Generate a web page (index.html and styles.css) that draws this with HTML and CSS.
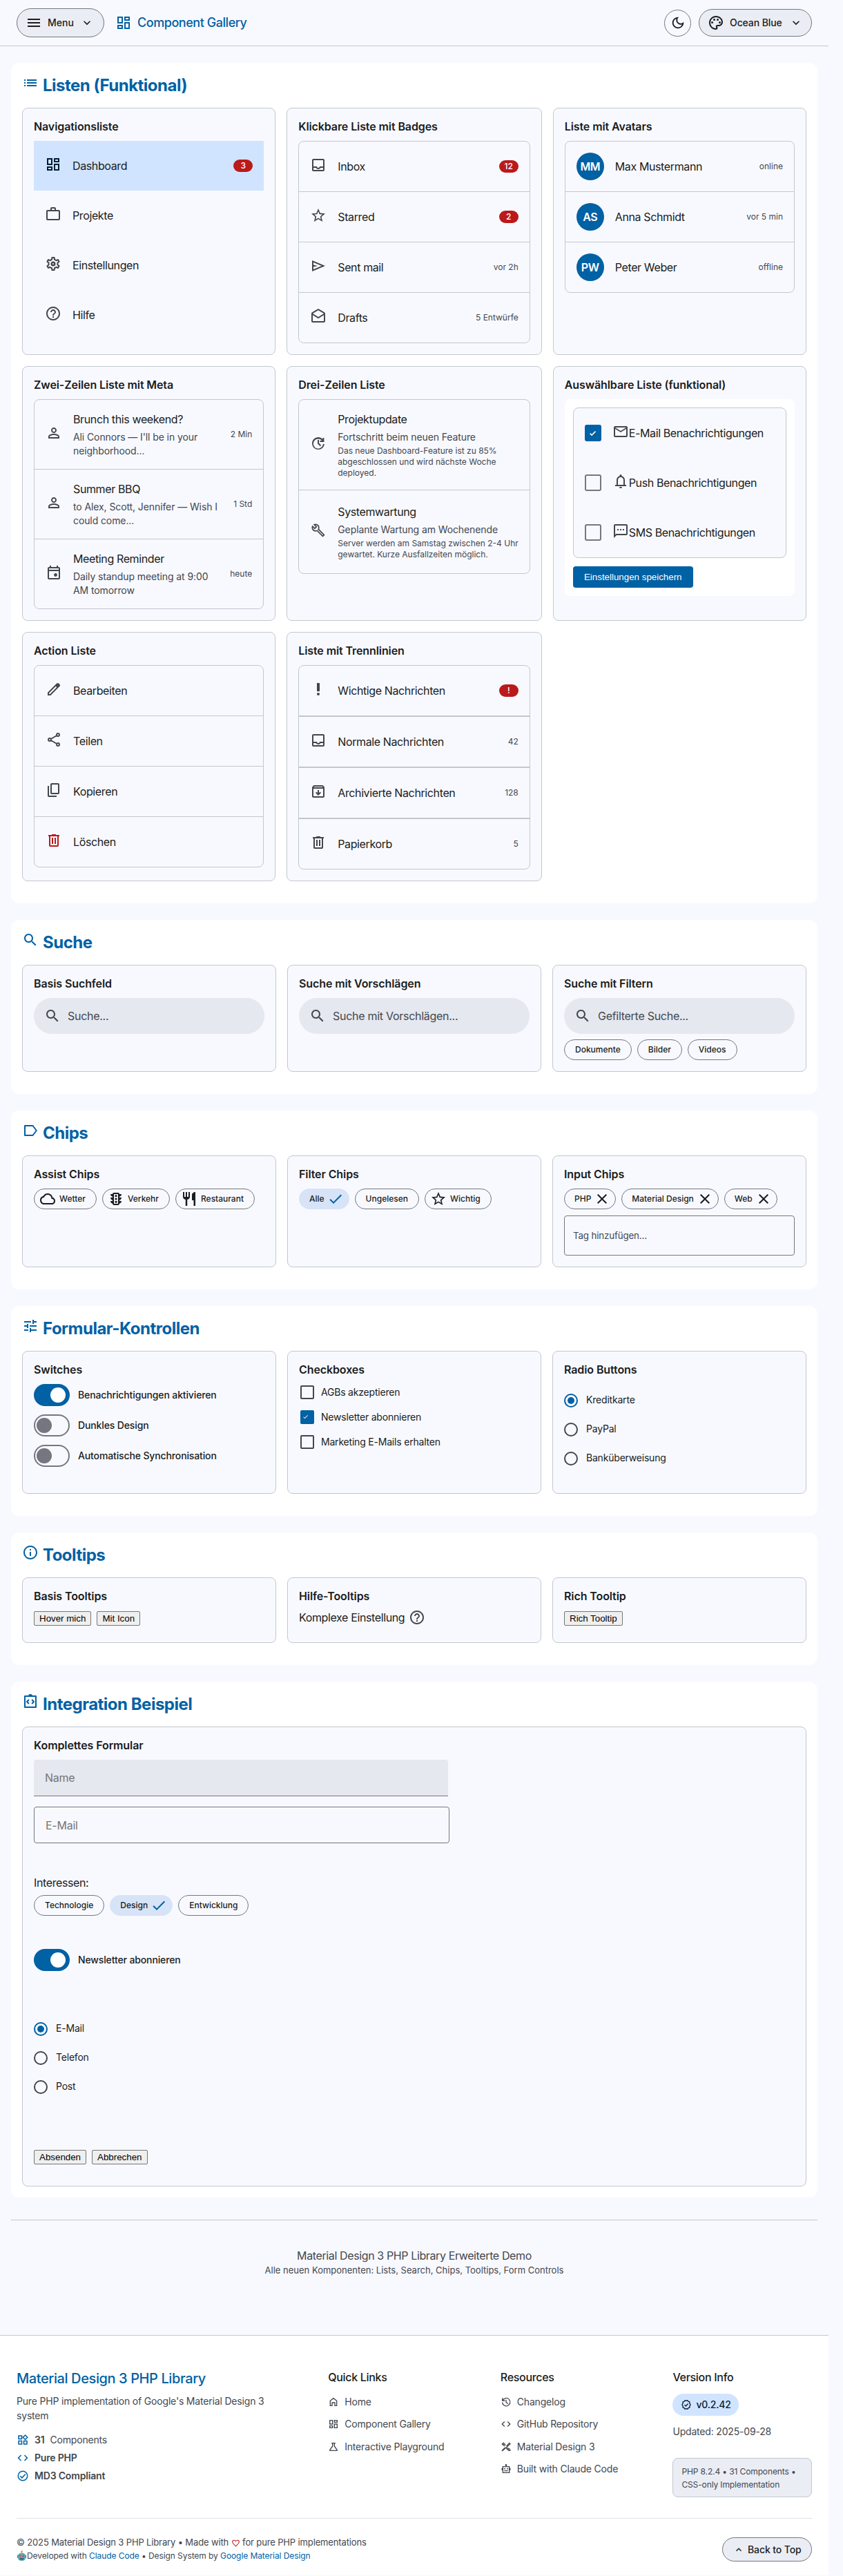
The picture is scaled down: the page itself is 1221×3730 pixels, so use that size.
FILE: index.html
```html
<!DOCTYPE html>
<html lang="de">
<head>
<meta charset="utf-8">
<title>Component Gallery</title>
<link rel="stylesheet" href="styles.css">
</head>
<body>
<svg class="sprite" aria-hidden="true">
<symbol id="dashboard" viewBox="0 0 24 24"><path d="M19 5v2h-4V5h4M9 5v6H5V5h4m10 8v6h-4v-6h4M9 17v2H5v-2h4M21 3h-8v6h8V3zM11 3H3v10h8V3zm10 8h-8v10h8V11zm-10 4H3v6h8v-6z"/></symbol>
<symbol id="menu" viewBox="0 0 24 24"><path d="M3 18h18v-2H3v2zm0-5h18v-2H3v2zm0-7v2h18V6H3z"/></symbol>
<symbol id="down" viewBox="0 0 24 24"><path d="M16.59 8.59 12 13.17 7.41 8.59 6 10l6 6 6-6z"/></symbol>
<symbol id="up" viewBox="0 0 24 24"><path d="M7.41 15.41 12 10.83l4.59 4.58L18 14l-6-6-6 6z"/></symbol>
<symbol id="moon" viewBox="0 0 24 24"><path d="M9.37 5.51c-.18.64-.27 1.31-.27 1.99 0 4.08 3.32 7.4 7.4 7.4.68 0 1.35-.09 1.99-.27C17.45 17.19 14.93 19 12 19c-3.86 0-7-3.14-7-7 0-2.93 1.81-5.45 4.37-6.49zM12 3c-4.97 0-9 4.03-9 9s4.03 9 9 9 9-4.03 9-9c0-.46-.04-.92-.1-1.36-.98 1.37-2.58 2.26-4.4 2.26-2.98 0-5.4-2.42-5.4-5.4 0-1.81.89-3.42 2.26-4.4-.44-.06-.9-.1-1.36-.1z"/></symbol>
<symbol id="palette" viewBox="0 0 24 24"><path d="M12 22C6.49 22 2 17.51 2 12S6.49 2 12 2s10 4.04 10 9c0 3.31-2.69 6-6 6h-1.77c-.28 0-.5.22-.5.5 0 .12.05.23.13.33.41.47.64 1.06.64 1.67 0 1.38-1.12 2.5-2.5 2.5zm0-18c-4.41 0-8 3.59-8 8s3.59 8 8 8c.28 0 .5-.22.5-.5 0-.16-.08-.28-.14-.35-.41-.46-.63-1.05-.63-1.65 0-1.38 1.12-2.5 2.5-2.5H16c2.21 0 4-1.79 4-4 0-3.86-3.59-7-8-7z"/><circle cx="6.5" cy="11.5" r="1.5"/><circle cx="9.5" cy="7.5" r="1.5"/><circle cx="14.5" cy="7.5" r="1.5"/><circle cx="17.5" cy="11.5" r="1.5"/></symbol>
<symbol id="list" viewBox="0 0 24 24"><path d="M3 13h2v-2H3v2zm0 4h2v-2H3v2zm0-8h2V7H3v2zm4 4h14v-2H7v2zm0 4h14v-2H7v2zM7 7v2h14V7H7z"/></symbol>
<symbol id="work" viewBox="0 0 24 24"><path d="M14 6V4h-4v2h4zM4 8v11h16V8H4zm16-2c1.11 0 2 .89 2 2v11c0 1.11-.89 2-2 2H4c-1.11 0-2-.89-2-2l.01-11c0-1.11.88-2 1.99-2h4V4c0-1.11.89-2 2-2h4c1.11 0 2 .89 2 2v2h4z"/></symbol>
<symbol id="settings" viewBox="0 0 24 24"><path fill-rule="evenodd" d="M19.43 12.98c.04-.32.07-.64.07-.98 0-.34-.03-.66-.07-.98l2.11-1.65c.19-.15.24-.42.12-.64l-2-3.46c-.09-.16-.26-.25-.44-.25-.06 0-.12.01-.17.03l-2.49 1c-.52-.4-1.08-.73-1.69-.98l-.38-2.65C14.46 2.18 14.25 2 14 2h-4c-.25 0-.46.18-.49.42l-.38 2.65c-.61.25-1.17.59-1.69.98l-2.49-1c-.06-.02-.12-.03-.18-.03-.17 0-.34.09-.43.25l-2 3.46c-.13.22-.07.49.12.64l2.11 1.65c-.04.32-.07.65-.07.98 0 .33.03.66.07.98l-2.11 1.65c-.19.15-.24.42-.12.64l2 3.46c.09.16.26.25.44.25.06 0 .12-.01.17-.03l2.49-1c.52.4 1.08.73 1.69.98l.38 2.65c.03.24.24.42.49.42h4c.25 0 .46-.18.49-.42l.38-2.65c.61-.25 1.17-.59 1.69-.98l2.49 1c.06.02.12.03.18.03.17 0 .34-.09.43-.25l2-3.46c.12-.22.07-.49-.12-.64l-2.11-1.65zm-1.98-1.71c.04.31.05.52.05.73 0 .21-.02.43-.05.73l-.14 1.13.89.7 1.08.84-.7 1.21-1.27-.51-1.04-.42-.9.68c-.43.32-.84.56-1.25.73l-1.06.43-.16 1.13-.2 1.35h-1.4l-.19-1.35-.16-1.13-1.06-.43c-.43-.18-.83-.41-1.23-.71l-.91-.7-1.06.43-1.27.51-.7-1.21 1.08-.84.89-.7-.14-1.13c-.03-.31-.05-.54-.05-.74s.02-.43.05-.73l.14-1.13-.89-.7-1.08-.84.7-1.21 1.27.51 1.04.42.9-.68c.43-.32.84-.56 1.25-.73l1.06-.43.16-1.13.2-1.35h1.39l.19 1.35.16 1.13 1.06.43c.43.18.83.41 1.23.71l.91.7 1.06-.43 1.27-.51.7 1.21-1.07.85-.89.7.14 1.13zM12 8.5a3.5 3.5 0 1 0 0 7 3.5 3.5 0 0 0 0-7zm0 2.4a1.1 1.1 0 1 1 0 2.2 1.1 1.1 0 0 1 0-2.2z"/></symbol>
<symbol id="help" viewBox="0 0 24 24"><path d="M11 18h2v-2h-2v2zm1-16C6.48 2 2 6.48 2 12s4.48 10 10 10 10-4.48 10-10S17.52 2 12 2zm0 18c-4.41 0-8-3.59-8-8s3.59-8 8-8 8 3.59 8 8-3.59 8-8 8zm0-14c-2.21 0-4 1.79-4 4h2c0-1.1.9-2 2-2s2 .9 2 2c0 2-3 1.75-3 5h2c0-2.25 3-2.5 3-5 0-2.21-1.79-4-4-4z"/></symbol>
<symbol id="inbox" viewBox="0 0 24 24"><path d="M19 3H5c-1.1 0-2 .9-2 2v14c0 1.1.89 2 2 2h14c1.1 0 2-.9 2-2V5c0-1.1-.9-2-2-2zm0 16H5v-3h3.56c.69 1.19 1.97 2 3.45 2s2.75-.81 3.45-2H19v3zm0-5h-4.99c0 1.1-.9 2-2 2s-2-.9-2-2H5V5h14v9z"/></symbol>
<symbol id="star" viewBox="0 0 24 24"><path d="M22 9.24l-7.19-.62L12 2 9.19 8.63 2 9.24l5.46 4.73L5.82 21 12 17.27 18.18 21l-1.63-7.03L22 9.24zM12 15.4l-3.76 2.27 1-4.28-3.32-2.88 4.38-.38L12 6.1l1.71 4.04 4.38.38-3.32 2.88 1 4.28L12 15.4z"/></symbol>
<symbol id="send" viewBox="0 0 24 24"><path d="M3 20V4l19 8zm2-3 11.85-5L5 7v3.5l6 1.5-6 1.5z"/></symbol>
<symbol id="drafts" viewBox="0 0 24 24"><path d="M21.99 8c0-.72-.37-1.35-.94-1.7L12 1 2.95 6.3C2.38 6.65 2 7.28 2 8v11c0 1.1.9 2 2 2h16c1.1 0 2-.9 2-2l-.01-11zM20 8v.01L12 13 4 8l8-4.68L20 8zM4 19v-8.66l8 5.02 8-5.02V19H4z"/></symbol>
<symbol id="person" viewBox="0 0 24 24"><path d="M12 5.9c1.16 0 2.1.94 2.1 2.1s-.94 2.1-2.1 2.1S9.9 9.16 9.9 8s.94-2.1 2.1-2.1m0 9c2.97 0 6.1 1.46 6.1 2.1v1.1H5.9V17c0-.64 3.13-2.1 6.1-2.1M12 4C9.79 4 8 5.79 8 8s1.79 4 4 4 4-1.79 4-4-1.79-4-4-4zm0 9c-2.67 0-8 1.34-8 4v3h16v-3c0-2.66-5.33-4-8-4z"/></symbol>
<symbol id="event" viewBox="0 0 24 24"><path d="M19 4h-1V2h-2v2H8V2H6v2H5c-1.11 0-1.99.9-1.99 2L3 20c0 1.1.89 2 2 2h14c1.1 0 2-.9 2-2V6c0-1.1-.9-2-2-2zm0 16H5V10h14v10zm0-12H5V6h14v2z"/><circle cx="14.5" cy="15.5" r="2.4"/></symbol>
<symbol id="update" viewBox="0 0 24 24"><path d="M12 21a9 9 0 1 1 6.4-15.35V4h2v6h-6V8h2.85A7 7 0 1 0 18.9 13h2.05A9 9 0 0 1 12 21zm2.8-4.8L11 12.4V7h2v4.6l3.2 3.2z"/></symbol>
<symbol id="build" viewBox="0 0 24 24"><path transform="translate(1.6 1.6) scale(.86)" d="M22.61 19l-9.08-9.09c.93-2.34.45-5.1-1.44-7C9.79.61 6.21.4 3.66 2.26L7.5 6.11 6.08 7.52 2.25 3.69C.39 6.23.6 9.82 2.9 12.11c1.86 1.86 4.57 2.35 6.89 1.48l9.11 9.11c.39.39 1.02.39 1.41 0l2.3-2.3c.4-.38.4-1.01 0-1.4zm-3 1.59l-9.46-9.46c-.61.45-1.29.72-2 .82-1.36.2-2.79-.21-3.83-1.25C3.37 9.76 2.93 8.5 3 7.26l3.09 3.09 4.24-4.24-3.09-3.09c1.24-.07 2.49.37 3.44 1.31 1.08 1.08 1.49 2.57 1.24 3.96-.12.71-.42 1.37-.88 1.96l9.45 9.45-.88.89z"/></symbol>
<symbol id="mail" viewBox="0 0 24 24"><path d="M22 6c0-1.1-.9-2-2-2H4c-1.1 0-2 .9-2 2v12c0 1.1.9 2 2 2h16c1.1 0 2-.9 2-2V6zm-2 0l-8 5-8-5h16zm0 12H4V8l8 5 8-5v10z"/></symbol>
<symbol id="bell" viewBox="0 0 24 24"><path d="M4 19v-2h2v-7q0-2.075 1.25-3.687T10.5 4.2v-.7q0-.625.438-1.062T12 2t1.063.438T13.5 3.5v.7q2 .5 3.25 2.113T18 10v7h2v2zm8 3q-.825 0-1.412-.587T10 20h4q0 .825-.587 1.413T12 22m-4-5h8v-7q0-1.65-1.175-2.825T12 6T9.175 7.175T8 10z"/></symbol>
<symbol id="sms" viewBox="0 0 24 24"><path d="M20 2H4c-1.1 0-2 .9-2 2v18l4-4h14c1.1 0 2-.9 2-2V4c0-1.1-.9-2-2-2zm0 14H5.17L4 17.17V4h16v12zM7 9h2v2H7zm4 0h2v2h-2zm4 0h2v2h-2z"/></symbol>
<symbol id="edit" viewBox="0 0 24 24"><path fill-rule="evenodd" d="M3 21v-4.25L16.2 3.575q.3-.275.663-.425t.762-.15t.775.15t.65.45L20.425 5q.3.275.438.65T21 6.4q0 .4-.137.763t-.438.662L7.25 21zM5 19h1.4l9.8-9.8-1.4-1.4L5 17.6z"/></symbol>
<symbol id="share" viewBox="0 0 24 24"><path fill="none" stroke="currentColor" stroke-width="1.9" d="M18 3a2 2 0 1 0 0 4 2 2 0 0 0 0-4zM6 10a2 2 0 1 0 0 4 2 2 0 0 0 0-4zM18 17a2 2 0 1 0 0 4 2 2 0 0 0 0-4zM7.8 11l8.4-5M7.8 13l8.4 5"/></symbol>
<symbol id="copy" viewBox="0 0 24 24"><path d="M9 18q-.825 0-1.412-.587T7 16V4q0-.825.588-1.412T9 2h9q.825 0 1.413.588T20 4v12q0 .825-.587 1.413T18 18zm0-2h9V4H9zm-4 6q-.825 0-1.412-.587T3 20V6h2v14h11v2z"/></symbol>
<symbol id="delete" viewBox="0 0 24 24"><path d="M7 21q-.825 0-1.412-.587T5 19V6H4V4h5V3h6v1h5v2h-1v13q0 .825-.587 1.413T17 21zM17 6H7v13h10zM9 17h2V8H9zm4 0h2V8h-2z"/></symbol>
<symbol id="priority" viewBox="0 0 24 24"><circle cx="12" cy="19" r="2"/><path d="M10 3h4v12h-4z"/></symbol>
<symbol id="archive" viewBox="0 0 24 24"><path d="M20.54 5.23l-1.39-1.68C18.88 3.21 18.47 3 18 3H6c-.47 0-.88.21-1.16.55L3.46 5.23C3.17 5.57 3 6.02 3 6.5V19c0 1.1.9 2 2 2h14c1.1 0 2-.9 2-2V6.5c0-.48-.17-.93-.46-1.27zM6.24 5h11.52l.83 1H5.42l.82-1zM5 19V8h14v11H5z"/><path d="m16 14-4 4-4-4 1.4-1.4 1.6 1.6V10h2v4.2l1.6-1.6z"/></symbol>
<symbol id="search" viewBox="0 0 24 24"><path d="M15.5 14h-.79l-.28-.27C15.41 12.59 16 11.11 16 9.5 16 5.91 13.09 3 9.5 3S3 5.91 3 9.5 5.91 16 9.5 16c1.61 0 3.09-.59 4.23-1.57l.27.28v.79l5 4.99L20.49 19l-4.99-5zm-6 0C7.01 14 5 11.99 5 9.5S7.01 5 9.5 5 14 7.01 14 9.5 11.99 14 9.5 14z"/></symbol>
<symbol id="label" viewBox="0 0 24 24"><path fill="none" stroke="currentColor" stroke-width="2" stroke-linejoin="round" d="M4 5h11.5L20.8 12l-5.3 7H4z"/></symbol>
<symbol id="cloud" viewBox="0 0 24 24"><path d="M19.35 10.04C18.67 6.59 15.64 4 12 4 9.11 4 6.6 5.64 5.35 8.04 2.8 8.36 1 10.91 1 14c0 3.31 2.5 6 5.5 6H18.5c2.5 0 4.5-2.24 4.5-5 0-2.64-1.6-4.6-3.65-4.96zM18.5 18H6.5C4.6 18 3 16.2 3 14s1.6-4 3.5-4h.4C7.37 7.69 9.48 6 12 6c3.04 0 5.5 2.46 5.5 5.5v.5h1c1.4 0 2.5 1.34 2.5 3s-1.1 3-2.5 3z"/></symbol>
<symbol id="traffic" viewBox="0 0 24 24"><path fill-rule="evenodd" d="M20 10h-3V8.86c1.72-.45 3-2 3-3.86h-3c0-1.1-.9-2-2-2H9c-1.1 0-2 .9-2 2H4c0 1.86 1.28 3.41 3 3.86V10H4c0 1.86 1.28 3.41 3 3.86V15H4c0 1.86 1.28 3.41 3 3.86C7 20.1 7.9 21 9 21h6c1.1 0 2-.9 2-2.14 1.72-.45 3-2 3-3.86h-3v-1.14c1.72-.45 3-2 3-3.86zM9 5h6v14H9z"/><circle cx="12" cy="7.7" r="1.6"/><circle cx="12" cy="12" r="1.6"/><circle cx="12" cy="16.3" r="1.6"/></symbol>
<symbol id="restaurant" viewBox="0 0 24 24"><path d="M11 9H9V2H7v7H5V2H3v7c0 2.12 1.66 3.84 3.75 3.97V22h2.5v-9.03C11.34 12.84 13 11.12 13 9V2h-2v7zm5-3v8h2.5v8H21V2c-2.76 0-5 2.24-5 4z"/></symbol>
<symbol id="check" viewBox="0 0 24 24"><path d="M9 16.17 4.83 12l-1.42 1.41L9 19 21 7l-1.41-1.41z"/></symbol>
<symbol id="close" viewBox="0 0 24 24"><path d="M19 6.41 17.59 5 12 10.59 6.41 5 5 6.41 10.59 12 5 17.59 6.41 19 12 13.41 17.59 19 19 17.59 13.41 12z"/></symbol>
<symbol id="tune" viewBox="0 0 24 24"><path d="M3 17v2h6v-2H3zM3 5v2h10V5H3zm10 16v-2h8v-2h-8v-2h-2v6h2zM7 9v2H3v2h4v2h2V9H7zm14 4v-2H11v2h10zm-6-4h2V7h4V5h-4V3h-2v6z"/></symbol>
<symbol id="info" viewBox="0 0 24 24"><path d="M11 7h2v2h-2zm0 4h2v6h-2zm1-9C6.48 2 2 6.48 2 12s4.48 10 10 10 10-4.48 10-10S17.52 2 12 2zm0 18c-4.41 0-8-3.59-8-8s3.59-8 8-8 8 3.59 8 8-3.59 8-8 8z"/></symbol>
<symbol id="integration" viewBox="0 0 24 24"><path fill="none" stroke="currentColor" stroke-width="2" stroke-linejoin="round" d="M4 4h16v16H4zM9.8 9 7 12l2.8 3M14.2 9l2.8 3-2.8 3"/><path d="M9 4a3 3 0 0 1 6 0z"/></symbol>
<symbol id="widgets" viewBox="0 0 24 24"><path fill="none" stroke="currentColor" stroke-width="2" d="M4 4h6v6H4zM4 14h6v6H4zM14 14h6v6h-6zM16.7 2.7 21 7l-4.3 4.3L12.4 7z"/></symbol>
<symbol id="code" viewBox="0 0 24 24"><path d="M9.4 16.6 4.8 12l4.6-4.6L8 6l-6 6 6 6zm5.2 0 4.6-4.6-4.6-4.6L16 6l6 6-6 6z"/></symbol>
<symbol id="checkcircle" viewBox="0 0 24 24"><path fill="none" stroke="currentColor" stroke-width="2" d="M12 3a9 9 0 1 0 0 18 9 9 0 0 0 0-18zM7 12.3l3.5 3.5 6.5-7"/></symbol>
<symbol id="home" viewBox="0 0 24 24"><path fill="none" stroke="currentColor" stroke-width="2" d="M5 9.5 12 4l7 5.500V20h-4v-6.500H9V20H5z"/></symbol>
<symbol id="science" viewBox="0 0 24 24"><path fill="none" stroke="currentColor" stroke-width="2" stroke-linejoin="round" d="M7.5 4h9M10 4v6.5L4 19c-.3.6 0 1 .6 1h14.8c.6 0 .9-.4.6-1l-6-8.500V4"/></symbol>
<symbol id="history" viewBox="0 0 24 24"><path fill="none" stroke="currentColor" stroke-width="2" d="M4 3.500V9h5.500M4.600 8.500A8.500 8.500 0 1 1 3.800 13M12 7v5.400l4 3.800"/></symbol>
<symbol id="design" viewBox="0 0 24 24"><path fill="none" stroke="currentColor" stroke-width="2" stroke-linejoin="round" d="M9.500 10.500 3.300 6.300 6.300 3.300l4.700 5.200M13 10.500l6-7 2 2-17 15H3.500V20L10 13.500M14 14l5.500 2.500L21 20h-3.500l-5-5M6.500 7l2-2M16 18l2-2"/></symbol>
<symbol id="robot" viewBox="0 0 24 24"><path fill="none" stroke="currentColor" stroke-width="2" d="M5 7h14v13H5zM12 7V3M8 16h8"/><circle cx="12" cy="3.500" r="2"/><circle cx="9" cy="11.500" r="1.500"/><circle cx="15" cy="11.500" r="1.500"/><path d="M5 9.500a3 3 0 0 0 0 6zM19 9.500a3 3 0 0 1 0 6z"/></symbol>
<symbol id="verified" viewBox="0 0 24 24"><path fill="none" stroke="currentColor" stroke-width="2" stroke-linejoin="round" d="M12 3.600 14.800 2.500 16.400 5.100 19.400 5.800 19.100 8.800 21.200 12 19.100 15.200 19.400 18.200 16.400 18.900 14.800 21.500 12 20.400 9.200 21.500 7.600 18.900 4.600 18.200 4.900 15.200 2.800 12 4.900 8.800 4.600 5.800 7.600 5.100 9.200 2.500zM8.200 12.200l2.700 2.700 5-5.200"/></symbol>
<symbol id="heart" viewBox="0 0 24 24"><path fill="none" stroke="currentColor" stroke-width="2" d="M12 20C5.500 14.500 3 12 3 8.500 3 6 5 4 7.500 4 9.500 4 11 5 12 6.500 13 5 14.500 4 16.500 4 19 4 21 6 21 8.500c0 3.500-2.500 6-9 11.500z"/></symbol>
</svg>
<div class="page">
<header class="topbar">
  <div class="pill pill-menu"><svg class="i24"><use href="#menu"/></svg><span>Menu</span><svg class="i20"><use href="#down"/></svg></div>
  <div class="brand"><svg class="i24"><use href="#dashboard"/></svg><span>Component Gallery</span></div>
  <div class="round"><svg class="i22"><use href="#moon"/></svg></div>
  <div class="pill pill-theme"><svg class="i24"><use href="#palette"/></svg><span>Ocean Blue</span><svg class="i20"><use href="#down"/></svg></div>
</header>
<main>
<section class="section">
  <h2><svg class="i24"><use href="#list"/></svg>Listen (Funktional)</h2>
  <div class="grid">
    <article class="card"><h3>Navigationsliste</h3>
      <ul class="list plain">
        <li class="active"><svg class="i24"><use href="#dashboard"/></svg><span class="t">Dashboard</span><b class="badge">3</b></li>
        <li><svg class="i24"><use href="#work"/></svg><span class="t">Projekte</span></li>
        <li><svg class="i24"><use href="#settings"/></svg><span class="t">Einstellungen</span></li>
        <li><svg class="i24"><use href="#help"/></svg><span class="t">Hilfe</span></li>
      </ul></article>
    <article class="card"><h3>Klickbare Liste mit Badges</h3>
      <ul class="list">
        <li><svg class="i24"><use href="#inbox"/></svg><span class="t">Inbox</span><b class="badge">12</b></li>
        <li><svg class="i24"><use href="#star"/></svg><span class="t">Starred</span><b class="badge">2</b></li>
        <li><svg class="i24"><use href="#send"/></svg><span class="t">Sent mail</span><small>vor 2h</small></li>
        <li><svg class="i24"><use href="#drafts"/></svg><span class="t">Drafts</span><small>5 Entwürfe</small></li>
      </ul></article>
    <article class="card"><h3>Liste mit Avatars</h3>
      <ul class="list">
        <li><b class="avatar">MM</b><span class="t">Max Mustermann</span><small>online</small></li>
        <li><b class="avatar">AS</b><span class="t">Anna Schmidt</span><small>vor 5 min</small></li>
        <li><b class="avatar">PW</b><span class="t">Peter Weber</span><small>offline</small></li>
      </ul></article>
    <article class="card"><h3>Zwei-Zeilen Liste mit Meta</h3>
      <ul class="list">
        <li><svg class="i24"><use href="#person"/></svg><div class="t">Brunch this weekend?<p>Ali Connors — I'll be in your<br>neighborhood...</p></div><small>2 Min</small></li>
        <li><svg class="i24"><use href="#person"/></svg><div class="t">Summer BBQ<p>to Alex, Scott, Jennifer — Wish I<br>could come...</p></div><small>1 Std</small></li>
        <li><svg class="i24"><use href="#event"/></svg><div class="t">Meeting Reminder<p>Daily standup meeting at 9:00<br>AM tomorrow</p></div><small>heute</small></li>
      </ul></article>
    <article class="card"><h3>Drei-Zeilen Liste</h3>
      <ul class="list three">
        <li><svg class="i24"><use href="#update"/></svg><div class="t">Projektupdate<p>Fortschritt beim neuen Feature</p><p class="body">Das neue Dashboard-Feature ist zu 85%<br>abgeschlossen und wird nächste Woche<br>deployed.</p></div></li>
        <li><svg class="i24"><use href="#build"/></svg><div class="t">Systemwartung<p>Geplante Wartung am Wochenende</p><p class="body">Server werden am Samstag zwischen 2-4 Uhr<br>gewartet. Kurze Ausfallzeiten möglich.</p></div></li>
      </ul></article>
    <article class="card"><h3>Auswählbare Liste (funktional)</h3>
      <form class="panel">
      <ul class="list select">
        <li><i class="box on"><svg><use href="#check"/></svg></i><svg class="i24"><use href="#mail"/></svg><span class="t">E-Mail Benachrichtigungen</span></li>
        <li><i class="box"></i><svg class="i24"><use href="#bell"/></svg><span class="t">Push Benachrichtigungen</span></li>
        <li><i class="box"></i><svg class="i24"><use href="#sms"/></svg><span class="t">SMS Benachrichtigungen</span></li>
      </ul>
      <button type="button" class="save">Einstellungen speichern</button>
      </form></article>
    <article class="card"><h3>Action Liste</h3>
      <ul class="list">
        <li><svg class="i24"><use href="#edit"/></svg><span class="t">Bearbeiten</span></li>
        <li><svg class="i24"><use href="#share"/></svg><span class="t">Teilen</span></li>
        <li><svg class="i24"><use href="#copy"/></svg><span class="t">Kopieren</span></li>
        <li><svg class="i24 danger"><use href="#delete"/></svg><span class="t">Löschen</span></li>
      </ul></article>
    <article class="card"><h3>Liste mit Trennlinien</h3>
      <ul class="list divided">
        <li><svg class="i24"><use href="#priority"/></svg><span class="t">Wichtige Nachrichten</span><b class="badge">!</b></li>
        <li><svg class="i24"><use href="#inbox"/></svg><span class="t">Normale Nachrichten</span><small>42</small></li>
        <li><svg class="i24"><use href="#archive"/></svg><span class="t">Archivierte Nachrichten</span><small>128</small></li>
        <li><svg class="i24"><use href="#delete"/></svg><span class="t">Papierkorb</span><small>5</small></li>
      </ul></article>
  </div>
</section>

<section class="section">
  <h2><svg class="i24"><use href="#search"/></svg>Suche</h2>
  <div class="grid">
    <article class="card"><h3>Basis Suchfeld</h3><div class="searchbar"><svg class="i24"><use href="#search"/></svg>Suche...</div></article>
    <article class="card"><h3>Suche mit Vorschlägen</h3><div class="searchbar"><svg class="i24"><use href="#search"/></svg>Suche mit Vorschlägen...</div></article>
    <article class="card"><h3>Suche mit Filtern</h3><div class="searchbar"><svg class="i24"><use href="#search"/></svg>Gefilterte Suche...</div>
      <div class="chips below"><span class="chip">Dokumente</span><span class="chip">Bilder</span><span class="chip">Videos</span></div></article>
  </div>
</section>

<section class="section">
  <h2><svg class="i24"><use href="#label"/></svg>Chips</h2>
  <div class="grid">
    <article class="card"><h3>Assist Chips</h3><div class="chips">
      <span class="chip lead"><svg class="i24"><use href="#cloud"/></svg>Wetter</span><span class="chip lead"><svg class="i24"><use href="#traffic"/></svg>Verkehr</span><span class="chip lead"><svg class="i24"><use href="#restaurant"/></svg>Restaurant</span></div></article>
    <article class="card"><h3>Filter Chips</h3><div class="chips">
      <span class="chip trail selected">Alle<svg class="i24"><use href="#check"/></svg></span><span class="chip">Ungelesen</span><span class="chip lead"><svg class="i24"><use href="#star"/></svg>Wichtig</span></div></article>
    <article class="card"><h3>Input Chips</h3><div class="chips input">
      <span class="chip trail">PHP<svg class="i24"><use href="#close"/></svg></span><span class="chip trail">Material Design<svg class="i24"><use href="#close"/></svg></span><span class="chip trail">Web<svg class="i24"><use href="#close"/></svg></span></div>
      <div class="taginput">Tag hinzufügen...</div></article>
  </div>
</section>

<section class="section">
  <h2><svg class="i24"><use href="#tune"/></svg>Formular-Kontrollen</h2>
  <div class="grid controls">
    <article class="card"><h3>Switches</h3>
      <label class="switch on"><i></i>Benachrichtigungen aktivieren</label>
      <label class="switch"><i></i>Dunkles Design</label>
      <label class="switch"><i></i>Automatische Synchronisation</label></article>
    <article class="card"><h3>Checkboxes</h3>
      <label class="checkbox"><i></i>AGBs akzeptieren</label>
      <label class="checkbox on"><i><svg><use href="#check"/></svg></i>Newsletter abonnieren</label>
      <label class="checkbox"><i></i>Marketing E-Mails erhalten</label></article>
    <article class="card"><h3>Radio Buttons</h3><div class="radios">
      <label class="radio on"><i></i><span>Kreditkarte</span></label>
      <label class="radio"><i></i><span>PayPal</span></label>
      <label class="radio"><i></i><span>Banküberweisung</span></label></div></article>
  </div>
</section>

<section class="section">
  <h2><svg class="i24"><use href="#info"/></svg>Tooltips</h2>
  <div class="grid tips">
    <article class="card"><h3>Basis Tooltips</h3><div class="buttons"><button type="button">Hover mich</button><button type="button">Mit Icon</button></div></article>
    <article class="card"><h3>Hilfe-Tooltips</h3><div class="helpline"><span class="t">Komplexe Einstellung</span><svg class="i24"><use href="#help"/></svg></div></article>
    <article class="card"><h3>Rich Tooltip</h3><div class="buttons"><button type="button">Rich Tooltip</button></div></article>
  </div>
</section>

<section class="section last">
  <h2><svg class="i24"><use href="#integration"/></svg>Integration Beispiel</h2>
  <form class="card form"><h3>Komplettes Formular</h3>
    <div class="field filled">Name</div>
    <div class="field outlined">E-Mail</div>
    <div class="t legend">Interessen:</div>
    <div class="chips"><span class="chip">Technologie</span><span class="chip trail selected">Design<svg class="i24"><use href="#check"/></svg></span><span class="chip">Entwicklung</span></div>
    <label class="switch on"><i></i>Newsletter abonnieren</label>
    <div class="radios"><label class="radio on"><i></i><span>E-Mail</span></label><label class="radio"><i></i><span>Telefon</span></label><label class="radio"><i></i><span>Post</span></label></div>
    <div class="buttons"><button type="button">Absenden</button><button type="button">Abbrechen</button></div>
  </form>
</section>
<div class="demo"><p class="t">Material Design 3 PHP Library Erweiterte Demo</p><p class="sub">Alle neuen Komponenten: Lists, Search, Chips, Tooltips, Form Controls</p></div>
</main>

<footer class="footer">
  <div class="cols">
    <div class="about"><h4>Material Design 3 PHP Library</h4><p>Pure PHP implementation of Google's Material Design 3<br>system</p>
      <ul class="stats"><li><svg class="i18"><use href="#widgets"/></svg><b>31</b><span>Components</span></li><li><svg class="i18"><use href="#code"/></svg><b>Pure PHP</b></li><li><svg class="i18"><use href="#checkcircle"/></svg><b>MD3 Compliant</b></li></ul></div>
    <div><h5>Quick Links</h5><ul class="links"><li><svg class="i16"><use href="#home"/></svg>Home</li><li><svg class="i16"><use href="#dashboard"/></svg>Component Gallery</li><li><svg class="i16"><use href="#science"/></svg>Interactive Playground</li></ul></div>
    <div><h5>Resources</h5><ul class="links"><li><svg class="i16"><use href="#history"/></svg>Changelog</li><li><svg class="i16"><use href="#code"/></svg>GitHub Repository</li><li><svg class="i16"><use href="#design"/></svg>Material Design 3</li><li><svg class="i16"><use href="#robot"/></svg>Built with Claude Code</li></ul></div>
    <div><h5>Version Info</h5><div class="version"><svg class="i16"><use href="#verified"/></svg>v0.2.42</div><p class="updated">Updated: 2025-09-28</p><div class="meta">PHP 8.2.4 • 31 Components •<br>CSS-only Implementation</div></div>
  </div>
  <div class="bottom">
    <div class="legal"><p>© 2025 Material Design 3 PHP Library • Made with <svg class="heart"><use href="#heart"/></svg> for pure PHP implementations</p>
      <p class="dev"><svg class="bot" viewBox="0 0 14 16"><circle cx="7" cy="1.500" r="1.500" fill="#f2a23a"/><path d="M7 2v3" stroke="#8aa" stroke-width="1.500"/><rect x="0" y="7" width="14" height="5" rx="1.500" fill="#58737c"/><rect x="1" y="4" width="12" height="12" rx="5" fill="#5fa9b3"/><rect x="3" y="7" width="3" height="3" rx="1.500" fill="#e6484d"/><rect x="8" y="7" width="3" height="3" rx="1.500" fill="#e6484d"/><rect x="4" y="12" width="6" height="2" fill="#255a63"/></svg>Developed with <a>Claude Code</a> • Design System by <a>Google Material Design</a></p></div>
    <div class="top"><svg class="i16"><use href="#up"/></svg>Back to Top</div>
  </div>
</footer>
</div>
</body>
</html>
```
FILE: styles.css
```css
* { box-sizing: border-box; margin: 0; padding: 0; }
body { background: #f8f9ff; color: #191c20; font: 16px/24px Inter, "Liberation Sans", sans-serif; }
ul { list-style: none; }
i { font-style: normal; }
svg { display: block; flex: none; fill: currentColor; }
.sprite { position: absolute; width: 0; height: 0; }
.i24 { width: 24px; height: 24px; }
.i22 { width: 22px; height: 22px; }
.i20 { width: 20px; height: 20px; }
.i18 { width: 18px; height: 18px; }
.i16 { width: 16px; height: 16px; }
.page { width: 1200px; }

.topbar { display: flex; align-items: center; height: 67px; padding: 0 24px; border-bottom: 1px solid #c2c7cf; }
.pill { display: flex; align-items: center; background: #ebedf5; border: 1px solid #74777f; border-radius: 21px; font-size: 14px; font-weight: 500; }
.pill-menu { width: 127px; height: 42px; padding-left: 12px; }
.pill-menu span { margin: 0 9px 0 8px; }
.pill-theme { width: 164px; height: 40px; padding-left: 12px; margin-left: 11px; }
.pill-theme span { margin: 0 10px 0 8px; letter-spacing: -.1px; }
.brand { display: flex; align-items: center; gap: 8px; margin-left: 16px; color: #0061a4; font-size: 18px; font-weight: 500; letter-spacing: -.45px; }
.round { display: grid; place-items: center; width: 39px; height: 39px; margin-left: auto; border: 1px solid #74777f; border-radius: 50%; }

main { padding: 24px 16px 0; }
.section { background: #fff; border-radius: 12px; padding: 16px 16px 32px; margin-bottom: 24px; }
.section.last { padding-bottom: 16px; margin-bottom: 32px; }
h2 { display: flex; align-items: center; gap: 6px; height: 33px; margin-bottom: 16px; font-size: 24px; line-height: 33px; font-weight: 700; letter-spacing: -.5px; color: #0061a4; }
h2 svg { margin-bottom: 8px; }
.grid { display: grid; grid-template-columns: repeat(3, 1fr); gap: 16px; }
.card { background: #f8f9ff; border: 1px solid #c2c7cf; border-radius: 8px; padding: 16px; }
h3 { font-size: 16px; line-height: 20px; font-weight: 600; letter-spacing: -.1px; margin-bottom: 11px; }
.t { letter-spacing: -.38px; }

.list { border: 1px solid #c2c7cf; border-radius: 8px; }
.list.plain { border: 0; }
.list li { display: flex; align-items: center; gap: 16px; min-height: 40px; padding: 16px; box-sizing: content-box; }
.list li + li { border-top: 1px solid #c2c7cf; }
.list.plain li + li, .list.select li + li { border-top: 0; }
.list.divided li + li { border-top-width: 2px; }
.list.three li { min-height: 88px; }
.list li > svg { margin-top: -4px; color: #42474e; }
.list li.active { background: #d1e4ff; }
.list li.active > svg { color: #001d36; }
.list li > svg.danger { color: #ba1a1a; }
.list .t { flex: 1; }
.list p { margin-top: 4px; font-size: 14px; line-height: 20px; letter-spacing: -.1px; color: #42474e; white-space: nowrap; }
.list p.body { margin-top: 2px; font-size: 12px; line-height: 16px; letter-spacing: 0; }
.list small { font-size: 12px; color: #42474e; }
.badge { min-width: 28px; height: 18px; border-radius: 9px; background: #ba1a1a; color: #fff; font-size: 12px; line-height: 18px; font-weight: 500; text-align: center; }
.avatar { width: 40px; height: 40px; border-radius: 50%; background: #0061a4; color: #fff; font-size: 16px; line-height: 40px; font-weight: 600; letter-spacing: -.4px; text-align: center; }
.panel { background: #fff; border-radius: 8px; padding: 12px; }
.panel .list { background: #f8f9ff; }
.list.select .t { margin-left: -16px; }
.box { display: grid; place-items: center; width: 24px; height: 24px; border: 2px solid #74777f; border-radius: 3px; }
.box.on { background: #0061a4; border-color: #0061a4; }
.box svg { width: 11px; height: 11px; color: #fff; stroke: #fff; stroke-width: 2; }
.save { display: block; width: 174px; height: 31px; margin-top: 12px; border: 0; border-radius: 4px; background: #0061a4; color: #fff; font: 13.333px "Liberation Sans", sans-serif; }

.searchbar { display: flex; align-items: center; gap: 10px; height: 52px; padding-left: 15px; border-radius: 26px; background: #e5e8ef; color: #42474e; letter-spacing: -.28px; }
.chips { display: flex; gap: 8px; }
.chips.below { margin-top: 8px; }
.chip { display: flex; align-items: center; height: 30px; padding: 0 15px; border: 1px solid #74777f; border-radius: 15px; font-size: 12px; font-weight: 500; white-space: nowrap; }
.chip.lead { padding-left: 7px; gap: 5px; }
.chip.trail { padding-right: 7px; gap: 4px; padding-left: 14px; }
.chip.selected { background: #d7e3f7; border-color: #d7e3f7; }
.chip.selected svg { color: #0061a4; }
.chips.input { margin-top: 1px; }
.taginput { height: 58px; margin-top: 9px; padding-left: 12px; border: 1px solid #74777f; border-radius: 4px; font-size: 13.333px; line-height: 56px; letter-spacing: -.15px; color: #42474e; }

.controls { grid-auto-rows: 207px; }
.switch { display: flex; align-items: center; gap: 12px; height: 32px; margin-bottom: 12px; font-size: 14px; font-weight: 500; letter-spacing: -.13px; }
.switch i { display: flex; align-items: center; width: 52px; height: 32px; padding: 0 2px; border: 2px solid #74777f; border-radius: 16px; }
.switch i::before { content: ""; width: 22px; height: 22px; border-radius: 50%; background: #74777f; }
.switch.on i { justify-content: flex-end; padding-right: 4px; background: #0061a4; border-color: #0061a4; }
.switch.on i::before { background: #fff; }
.checkbox { display: flex; align-items: center; gap: 10px; height: 24px; margin-bottom: 12px; padding-left: 2px; font-size: 14px; letter-spacing: -.2px; }
.checkbox i { width: 20px; height: 20px; border: 2px solid #42474e; border-radius: 2px; }
.checkbox.on i { background: #0061a4; border-color: #0061a4; }
.checkbox svg { width: 9px; height: 9px; margin: 3px 0 0 1px; color: #fff; }
.radios { padding-top: 14px; }
.radio { display: flex; gap: 12px; height: 42px; font-size: 14px; line-height: 17px; letter-spacing: -.2px; }
.radio i { display: grid; place-items: center; width: 20px; height: 20px; border: 2px solid #42474e; border-radius: 50%; }
.radio.on i { border-color: #0061a4; }
.radio.on i::before { content: ""; width: 10px; height: 10px; border-radius: 50%; background: #0061a4; }

.tips { grid-auto-rows: 95px; }
.buttons { display: flex; gap: 8px; }
.buttons button { height: 21px; padding: 1px 7px; border: 1px solid #767676; border-radius: 2px; background: #efefef; font: 13.333px "Liberation Sans", sans-serif; color: #000; }
.tips .buttons { padding-top: 1px; }
.helpline { display: flex; align-items: center; gap: 6px; height: 20px; }
.helpline svg { color: #42474e; }

.form { height: 666px; }
.field { display: flex; align-items: center; height: 53px; padding-left: 16px; letter-spacing: -.25px; color: #757575; }
.filled { width: 600px; background: #e5e8ef; border-bottom: 1px solid #74777f; border-radius: 4px 4px 0 0; }
.outlined { width: 602px; margin-top: 15px; border: 1px solid #74777f; border-radius: 4px; }
.legend { margin: 45px 0 6px; }
.form .switch { margin-top: 48px; }
.form .radios { margin-top: 60px; }
.form .buttons { margin-top: 59px; }

.demo { height: 167px; padding-top: 39px; border-top: 1px solid #c2c7cf; text-align: center; color: #42474e; line-height: 24px; }
.demo .sub { font-size: 13px; line-height: 18px; }

.footer { background: #fff; border-top: 1px solid #c2c7cf; padding: 48px 24px 0; height: 348px; font-size: 14px; color: #42474e; }
.cols { display: grid; grid-template-columns: 2fr 1fr 1fr 1fr; gap: 48px; height: 216px; letter-spacing: -.18px; }
h4 { font-size: 20px; line-height: 28px; font-weight: 500; letter-spacing: -.4px; color: #0061a4; margin-bottom: 8px; }
.about p { line-height: 21px; white-space: nowrap; }
.stats { margin-top: 12px; }
.stats li { display: flex; align-items: center; gap: 8px; height: 26px; }
.stats svg { color: #0061a4; }
.stats b { font-weight: 600; }
h5 { font-size: 16px; line-height: 24px; font-weight: 500; letter-spacing: -.3px; color: #191c20; }
.links { margin-top: 8px; }
.links li { display: flex; align-items: center; gap: 8px; height: 32.3px; white-space: nowrap; }
.version { display: flex; align-items: center; gap: 6px; width: 96px; height: 32px; margin-top: 12px; padding-left: 12px; border-radius: 16px; background: #d1e4ff; color: #001d36; font-weight: 500; }
.updated { margin: 11px 0 26px; }
.meta { height: 57px; padding: 9px 0 0 12px; border: 1px solid #c2c7cf; border-radius: 8px; background: #ebedf5; font-size: 12px; line-height: 19px; letter-spacing: -.12px; white-space: nowrap; }
.bottom { display: flex; justify-content: space-between; border-top: 1px solid #dfe2eb; padding-top: 27px; }
.legal { font-size: 13px; line-height: 20px; margin-top: -3px; letter-spacing: -.14px; }
.legal svg { display: inline-block; }
.heart { width: 13px; height: 13px; color: #ba1a1a; vertical-align: -3px; }
.dev { font-size: 12px; letter-spacing: -.08px; }
.bot { width: 15px; height: 15px; vertical-align: -3px; }
.dev a { color: #0061a4; }
.top { display: flex; align-items: center; gap: 5px; width: 130px; height: 35px; padding-left: 15px; border: 1px solid #74777f; border-radius: 18px; background: #ebedf5; color: #191c20; font-weight: 500; letter-spacing: -.1px; }
```
